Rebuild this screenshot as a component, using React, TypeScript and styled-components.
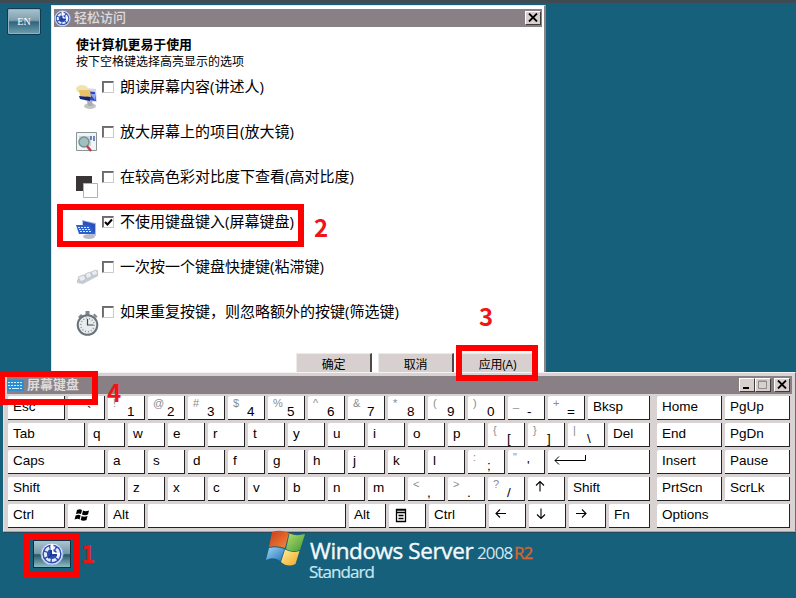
import React from "react";
import styled, { createGlobalStyle, css } from "styled-components";

const GlobalStyle = createGlobalStyle`
  html, body { margin: 0; padding: 0; overflow: hidden; background: #17607b; }
  *, *::before, *::after { box-sizing: border-box; }
`;

const cjk = `"Open Sans", "Noto Sans CJK SC", sans-serif`;
const face = "#d8d0cf";

const Desktop = styled.main`
  position: relative;
  width: 796px;
  height: 598px;
  overflow: hidden;
  background: #17607b;
  border-top: 3px solid #3e4b52;
  font-family: ${cjk};
  color: #000;
`;

const LangButton = styled.button`
  position: absolute;
  left: 7px;
  top: 5px;
  width: 34px;
  height: 27px;
  padding: 0 0 1px;
  border: 1px solid #0f3a50;
  border-radius: 2px;
  background: linear-gradient(#a9c3cf 0, #7f9eac 45%, #31647c 52%, #6fa0b0 100%);
  box-shadow: inset 0 0 0 1px #8fb3c0;
  color: #fff;
  font: 400 10px "Liberation Serif", serif;
`;

const Dialog = styled.section`
  position: absolute;
  left: 51px;
  top: 2px;
  width: 495px;
  height: 380px;
  padding: 3px 2px 0;
  background: #fff;
  border: 1px solid #d9e9f0;
  border-right: 2px solid #8c8287;
`;

const TitleBar = styled.header<{ $h: number }>`
  display: flex;
  align-items: center;
  height: ${(p) => p.$h}px;
  background: #888084;
`;

const TitleText = styled.span<{ $bold?: boolean }>`
  flex: 1;
  margin: -2px 0 0 3px;
  font-size: 13px;
  line-height: 16px;
  font-weight: ${(p) => (p.$bold ? 700 : 500)};
  color: #dedbdc;
`;

const WinButton = styled.button<{ $gap?: number; $disabled?: boolean }>`
  display: grid;
  place-items: center;
  width: 16px;
  height: 14px;
  padding: 0;
  margin: -1px ${(p) => p.$gap ?? 0}px 0 0;
  border: 1px solid;
  border-color: #fff #403c3e #403c3e #fff;
  background: ${face};
  color: ${(p) => (p.$disabled ? "#918b8d" : "#000")};
  svg { display: block; }
`;

const DialogBody = styled.div`
  padding: 9px 0 0 22px;
`;

const Heading = styled.h1`
  margin: 0;
  font-size: 12.9px;
  line-height: 17px;
  font-weight: 700;
`;

const Hint = styled.p`
  margin: 0;
  font-size: 12px;
  line-height: 18px;
`;

const OptionList = styled.ul`
  list-style: none;
  margin: 4px 0 0;
  padding: 0;
`;

const Option = styled.li`
  display: grid;
  grid-template-columns: 26px 18px 1fr;
  height: 45px;
  > svg { margin-top: 10px; }
`;

const CheckBox = styled.span`
  display: grid;
  place-items: center;
  width: 12px;
  height: 12px;
  margin-top: 6px;
  border: 1px solid;
  border-color: #6d686a #cfcaca #cfcaca #6d686a;
  box-shadow: inset 1px 1px 0 #777;
`;

const OptionLabel = styled.span`
  padding-top: 1px;
  font-size: 15px;
  line-height: 20px;
  white-space: nowrap;
`;

const Buttons = styled.div`
  position: absolute;
  left: 244px;
  top: 347px;
  display: flex;
  gap: 6px;
`;

const PushButton = styled.button`
  width: 76px;
  height: 22px;
  padding: 0;
  border: 1px solid;
  border-color: #efeaea #4e484b #4e484b #efeaea;
  border-right-width: 2px;
  background: ${face};
  font: 12px ${cjk};
  letter-spacing: -0.2px;
  color: #000;
`;

const Keyboard = styled.section`
  position: absolute;
  left: 3px;
  top: 369px;
  width: 793px;
  height: 160px;
  padding: 3px 3px 0;
  background: #d8d2d3;
  border: 1px solid;
  border-color: #f4f4f4 #6e6b70 #aaa3a6 #e6e1e3;
  box-shadow: 0 1px 0 #24495c;
`;

const KeyArea = styled.div`
  display: flex;
  gap: 7px;
  margin: 2px 0 0 1px;
  font-family: "Liberation Sans", Arial, sans-serif;
`;

const KeyBlock = styled.div`
  display: grid;
  row-gap: 3px;
`;

const KeyRow = styled.div`
  display: flex;
  gap: 3px;
`;

const Key = styled.div<{ $w: number }>`
  position: relative;
  width: ${(p) => p.$w}px;
  height: 24px;
  padding-left: 5px;
  background: #fff;
  border-right: 1px solid #242224;
  border-bottom: 1px solid #242224;
  border-top-left-radius: 2px;
  font-size: 13.5px;
  line-height: 21px;
  white-space: nowrap;
  > svg { display: block; }
`;

const DualFace = styled.span`
  display: flex;
`;

const Upper = styled.span`
  width: 14px;
  font-size: 11px;
  line-height: 14px;
  color: #8c8c8c;
`;

const Lower = styled.span`
  line-height: 31px;
`;

const frame = css`
  position: absolute;
  border: 6px solid #fe0000;
  pointer-events: none;
`;

const Marker = styled.div<{ $x: number; $y: number; $w: number; $h: number }>`
  ${frame}
  left: ${(p) => p.$x}px;
  top: ${(p) => p.$y - 3}px;
  width: ${(p) => p.$w}px;
  height: ${(p) => p.$h}px;
`;

const StepNumber = styled.span<{ $x: number; $y: number; $size?: number }>`
  position: absolute;
  left: ${(p) => p.$x}px;
  top: ${(p) => p.$y - 3}px;
  font: 700 ${(p) => p.$size ?? 24}px/24px "Noto Sans CJK SC", sans-serif;
  color: #f01414;
`;

const EaseButton = styled.button`
  position: absolute;
  left: 33px;
  top: 537px;
  width: 38px;
  height: 28px;
  display: grid;
  place-items: center;
  padding: 0;
  border: 1px solid #0d2f3f;
  background: linear-gradient(#a9c6d0 0, #7599a5 48%, #285767 53%, #8cbcc4 100%);
`;

const Brand = styled.div`
  position: absolute;
  left: 265px;
  top: 526px;
  display: flex;
  color: #f2fafd;
`;

const BrandText = styled.div`
  margin: 9px 0 0 3px;
  white-space: nowrap;
`;

const BrandLine = styled.div`
  display: flex;
  align-items: baseline;
  height: 25px;
  line-height: 25px;
`;

const Product = styled.span`
  width: 167px;
  font-size: 22.5px;
  letter-spacing: -0.4px;
  -webkit-text-stroke: 0.4px #f2fafd;
`;

const Year = styled.span<{ $accent?: boolean }>`
  width: ${(p) => (p.$accent ? 24 : 37)}px;
  font-size: 17px;
  letter-spacing: -0.9px;
  color: ${(p) => (p.$accent ? "#d8632c" : "#d3e8f0")};
  -webkit-text-stroke: ${(p) => (p.$accent ? "0.4px #d8632c" : "0")};
`;

const Edition = styled.div`
  margin-left: -1px;
  font-size: 17px;
  line-height: 18px;
  letter-spacing: -0.95px;
  color: #c9e6f0;
  -webkit-text-stroke: 0.2px #c9e6f0;
`;

const EaseIcon = ({ size }: { size: number }) => (
  <svg width={size} height={size} viewBox="0 0 24 24">
    <circle cx="12" cy="12" r="11" fill="#e6eefc" stroke="#9db4e4" />
    <circle cx="12" cy="12" r="9.600" fill="#2f4fae" />
    <circle cx="12" cy="12" r="6.600" fill="none" stroke="#e4ecff" strokeWidth="3" strokeDasharray="4.500 1.400" />
    <path d="M12 2v8l3 2h5" fill="none" stroke="#fff" strokeWidth="2.800" />
    <path d="M11 8v5h6M11 13l-3 3" fill="none" stroke="#1f3c98" strokeWidth="2" />
  </svg>
);

const CloseGlyph = () => (
  <svg width="10" height="9" viewBox="0 0 10 9">
    <path d="m1 .5 8 8M9 .5l-8 8" stroke="currentColor" strokeWidth="1.8" />
  </svg>
);

const MinGlyph = () => (
  <svg width="10" height="9" viewBox="0 0 10 9">
    <path d="M1 8h6" stroke="currentColor" strokeWidth="2" />
  </svg>
);

const MaxGlyph = () => (
  <svg width="10" height="9" viewBox="0 0 10 9">
    <path d="M.5 1h8v7.5h-8zM.5 1.5h8" fill="none" stroke="currentColor" />
  </svg>
);

const NarratorIcon = () => (
  <svg width="24" height="28" viewBox="0 0 24 28">
    <path d="m8 3 12 1 1 13-12-1z" fill="#d4d9ea" />
    <path d="m10 6 9 1 1 9-9-1z" fill="#3346c6" />
    <path d="M14 9l5 0v6z" fill="#8ba5ee" />
    <ellipse cx="6" cy="4" rx="6" ry="4" fill="#efe3b0" />
    <path d="M3 5h11l1 7-11-1z" fill="#e9c368" />
    <path d="m3 11 11 1v4l-10-2z" fill="#17256e" />
    <ellipse cx="14" cy="21" rx="6" ry="3" fill="#c3c4c2" />
    <path d="M11 16h5l1 5h-5z" fill="#a9adb4" />
  </svg>
);

const MagnifierIcon = () => (
  <svg width="24" height="28" viewBox="0 0 24 28">
    <path d="M.5 2.500h20v18h-20z" fill="#f1f4f5" stroke="#8b9496" />
    <path d="M3 6h12v10H3z" fill="#cbd7da" />
    <path d="M15 6v4M18 6v5" stroke="#4366a5" strokeWidth="1.5" />
    <circle cx="8" cy="12" r="5" fill="#9fc0bc" stroke="#798f93" strokeWidth="1.4" />
    <path d="m11 16 4 5" stroke="#b63f4b" strokeWidth="2.5" />
  </svg>
);

const ContrastIcon = () => (
  <svg width="24" height="28" viewBox="0 0 24 28">
    <path d="M0 1h16v15H0z" fill="#393537" />
    <path d="M7.5 8.500h14v14h-14z" fill="#fff" stroke="#b4b0b4" />
  </svg>
);

const OnScreenIcon = () => (
  <svg width="24" height="28" viewBox="0 0 24 28">
    <path d="m6 0 14 3v13l-13-4z" fill="#a9bde6" />
    <path d="m7 1 12 3v9L7 10z" fill="#2d50bd" />
    <path d="M0 5h14l5 9H3z" fill="#2b61c9" />
    <path d="M2 7.500h11M3 9.500h11M4 11.500h11" stroke="#d8eaff" strokeDasharray="2 1" />
    <ellipse cx="13" cy="16.500" rx="6" ry="2.500" fill="#b5bcc6" />
  </svg>
);

const StickyIcon = () => (
  <svg width="24" height="28" viewBox="0 0 24 28">
    <path d="m1 15 3-4 18-6v6L7 19l-6-1z" fill="#c6ccd3" />
    <path d="m2 12 6-2 2 4-5 3zM9 9l5-2 2 4-5 3zM15 7l5-2 2 4-5 2z" fill="#e9edf1" stroke="#b4bac2" strokeWidth=".7" />
  </svg>
);

const StopwatchIcon = () => (
  <svg width="24" height="28" viewBox="0 0 24 28">
    <path d="M9.500 1h4v5h-4zM2 7l3-3 2 1.500L4 8.500zM20 8l-3-3 1.500-1.500 3 3z" fill="#7d858d" />
    <circle cx="11.500" cy="15" r="9.800" fill="#e8eced" stroke="#6a727a" strokeWidth="2" />
    <circle cx="11.500" cy="15" r="6.700" fill="none" stroke="#8c969c" strokeWidth="1.400" strokeDasharray="1 2" />
    <path d="M11.500 9v6h6" fill="none" stroke="#3e474f" strokeWidth="1.200" />
  </svg>
);

const KeyboardIcon = () => (
  <svg width="17" height="11" viewBox="0 0 17 11">
    <path d="M0 0h17v11H0z" fill="#2b8ed0" />
    <path d="M1 2.500h15M1 5.500h15" stroke="#d7f0ff" strokeDasharray="2 1" />
    <path d="M2 8.500h13" stroke="#d7f0ff" strokeDasharray="2 1 7 1" />
  </svg>
);

const Arrow = ({ turn }: { turn: number }) => (
  <svg width="20" height="20" viewBox="0 0 20 20">
    <g transform={`rotate(${turn} 7 9.5)`}>
      <path d="M2 9.500h10M6 5.500l-4 4 4 4" fill="none" stroke="#000" strokeWidth="1.100" />
    </g>
  </svg>
);

const EnterArrow = () => (
  <svg width="36" height="20" viewBox="0 0 36 20">
    <path d="M2 10.500h30.500V5M6 6.500l-4 4 4 4" fill="none" stroke="#000" />
  </svg>
);

const WinLogoKey = () => (
  <svg width="20" height="22" viewBox="0 0 20 22">
    <path d="M4 6q3-1.500 5 0L8 10Q6 9 3 10zM10 6.500q2 1.500 6 0l-1 4q-3 1.500-6 0zM2.600 11.500q3-1.500 5 0l-1 4q-2-1.500-5 0zM8.700 12q2 1.500 5.800 0l-1 4q-3 1.500-5.800 0z" fill="#000" />
  </svg>
);

const MenuKeyGlyph = () => (
  <svg width="16" height="22" viewBox="0 0 16 22">
    <path d="M2.500 5.500h9v12h-9zM2 6h10M2 8.500h10M4.500 11.500h5M4.500 14.500h5" fill="none" stroke="#000" strokeWidth="1.300" />
  </svg>
);

const WindowsFlag = () => (
  <svg width="42" height="42" viewBox="0 0 42 42">
    <defs>
      <linearGradient id="red" x2="1" y2="1"><stop stopColor="#c83a1a" /><stop offset="1" stopColor="#f58a3a" /></linearGradient>
      <linearGradient id="green" x2="1" y2="1"><stop stopColor="#b8dc70" /><stop offset="1" stopColor="#3f9a35" /></linearGradient>
      <linearGradient id="blue" x2="1" y2="1"><stop stopColor="#9bd6f6" /><stop offset="1" stopColor="#2873b8" /></linearGradient>
      <linearGradient id="yellow" x2="1" y2="1"><stop stopColor="#fff0a0" /><stop offset="1" stopColor="#f0a51e" /></linearGradient>
    </defs>
    <path d="M7 3q9-3 17 1l-4 15q-8-3-16-1z" fill="url(#red)" />
    <path d="M24.500 4.500q7 3 15.500.5l-5 16q-8 3-14-1z" fill="url(#green)" />
    <path d="M4 19q8-2 15.500 1l-4 12q-7-5-14.500-1z" fill="url(#blue)" />
    <path d="M20 20.500q7 4 14.500 1.500l-4 13q-8 4-14.500-2z" fill="url(#yellow)" />
  </svg>
);

const options = [
  { label: "朗读屏幕内容(讲述人)", icon: <NarratorIcon /> },
  { label: "放大屏幕上的项目(放大镜)", icon: <MagnifierIcon /> },
  { label: "在较高色彩对比度下查看(高对比度)", icon: <ContrastIcon /> },
  { label: "不使用键盘键入(屏幕键盘)", icon: <OnScreenIcon />, checked: true },
  { label: "一次按一个键盘快捷键(粘滞键)", icon: <StickyIcon /> },
  { label: "如果重复按键，则忽略额外的按键(筛选键)", icon: <StopwatchIcon /> },
];

type KeyDef = { w?: number; text?: string; upper?: string; icon?: React.ReactNode };

const plain = (letters: string): KeyDef[] => letters.split("").map((text) => ({ text }));
const dual = (pairs: string[]): KeyDef[] => pairs.map((p) => ({ upper: p[0], text: p[1] }));

const mainRows: KeyDef[][] = [
  [{ text: "Esc", w: 57 }, ...dual(["~`", "!1", "@2", "#3", "$4", "%5", "^6", "&7", "*8", "(9", ")0", "_-", "+="]), { text: "Bksp", w: 62 }],
  [{ text: "Tab", w: 77 }, ...plain("qwertyuiop"), ...dual(["{[", "}]", "|\\"]), { text: "Del", w: 42 }],
  [{ text: "Caps", w: 97 }, ...plain("asdfghjkl"), ...dual([":;", "\"'"]), { icon: <EnterArrow />, w: 102 }],
  [{ text: "Shift", w: 117 }, ...plain("zxcvbnm"), ...dual(["<,", ">.", "?/"]), { icon: <Arrow turn={90} /> }, { text: "Shift", w: 82 }],
  [
    { text: "Ctrl", w: 57 }, { icon: <WinLogoKey /> }, { text: "Alt" }, { w: 198 }, { text: "Alt" },
    { icon: <MenuKeyGlyph /> }, { text: "Ctrl", w: 57 }, { icon: <Arrow turn={0} /> },
    { icon: <Arrow turn={-90} /> }, { icon: <Arrow turn={180} /> }, { text: "Fn", w: 41 },
  ],
];

const navRows: KeyDef[][] = [
  [{ text: "Home", w: 65 }, { text: "PgUp", w: 65 }],
  [{ text: "End", w: 65 }, { text: "PgDn", w: 65 }],
  [{ text: "Insert", w: 65 }, { text: "Pause", w: 65 }],
  [{ text: "PrtScn", w: 65 }, { text: "ScrLk", w: 65 }],
  [{ text: "Options", w: 133 }],
];

const Keys = ({ rows }: { rows: KeyDef[][] }) => (
  <KeyBlock>
    {rows.map((row, r) => (
      <KeyRow key={r}>
        {row.map((k, i) => (
          <Key key={i} $w={k.w ?? 37}>
            {k.icon}
            {k.upper ? (
              <DualFace>
                <Upper>{k.upper}</Upper>
                <Lower>{k.text}</Lower>
              </DualFace>
            ) : (
              k.text
            )}
          </Key>
        ))}
      </KeyRow>
    ))}
  </KeyBlock>
);

export default function App() {
  return (
    <>
      <GlobalStyle />
      <Desktop>
        <LangButton>EN</LangButton>

        <Dialog>
          <TitleBar $h={18}>
            <EaseIcon size={17} />
            <TitleText>轻松访问</TitleText>
            <WinButton $gap={1}><CloseGlyph /></WinButton>
          </TitleBar>
          <DialogBody>
            <Heading>使计算机更易于使用</Heading>
            <Hint>按下空格键选择高亮显示的选项</Hint>
            <OptionList>
              {options.map((o) => (
                <Option key={o.label}>
                  {o.icon}
                  <CheckBox>
                    {o.checked && (
                      <svg width="9" height="9" viewBox="0 0 9 9">
                        <path d="m1 4 2.500 2.500L8 1.500" fill="none" stroke="#000" strokeWidth="2" />
                      </svg>
                    )}
                  </CheckBox>
                  <OptionLabel>{o.label}</OptionLabel>
                </Option>
              ))}
            </OptionList>
          </DialogBody>
          <Buttons>
            <PushButton>确定</PushButton>
            <PushButton>取消</PushButton>
            <PushButton>应用(A)</PushButton>
          </Buttons>
        </Dialog>

        <Keyboard>
          <TitleBar $h={18}>
            <KeyboardIcon />
            <TitleText $bold>屏幕键盘</TitleText>
            <WinButton><MinGlyph /></WinButton>
            <WinButton $gap={3} $disabled><MaxGlyph /></WinButton>
            <WinButton $gap={2}><CloseGlyph /></WinButton>
          </TitleBar>
          <KeyArea>
            <Keys rows={mainRows} />
            <Keys rows={navRows} />
          </KeyArea>
        </Keyboard>

        <EaseButton><EaseIcon size={24} /></EaseButton>

        <Brand>
          <WindowsFlag />
          <BrandText>
            <BrandLine>
              <Product>Windows Server</Product>
              <Year>2008</Year>
              <Year $accent>R2</Year>
            </BrandLine>
            <Edition>Standard</Edition>
          </BrandText>
        </Brand>

        <Marker $x={23} $y={533} $w={56} $h={44} />
        <Marker $x={57} $y={204} $w={247} $h={43} />
        <Marker $x={456} $y={345} $w={82} $h={36} />
        <Marker $x={-1} $y={371} $w={99} $h={34} />
        <StepNumber $x={81} $y={541}>1</StepNumber>
        <StepNumber $x={314} $y={215}>2</StepNumber>
        <StepNumber $x={479} $y={304}>3</StepNumber>
        <StepNumber $x={107} $y={380}>4</StepNumber>
      </Desktop>
    </>
  );
}
